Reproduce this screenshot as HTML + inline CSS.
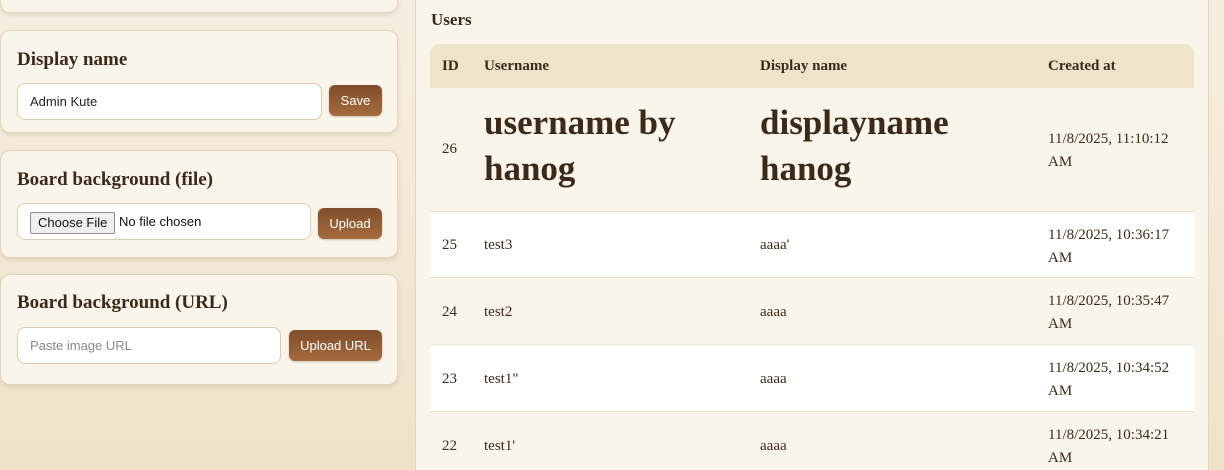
<!DOCTYPE html><html style="width:1224px;height:470px;overflow:hidden"><head><style>
*{box-sizing:border-box;margin:0;padding:0}
body{width:1224px;height:470px;overflow:hidden;background:linear-gradient(180deg,#f5eee0,#efe2c9);font-family:"Liberation Serif",serif;color:#3b2a1a;position:relative}
.card{position:absolute;left:0;width:398px;background:#faf5ea;border:1px solid #e3d5bb;border-radius:10px;box-shadow:0 2px 4px rgba(120,90,50,.15)}
.card h3{position:absolute;left:16px;font-size:19px;font-weight:bold;color:#3b2a1a}
.inp{position:absolute;left:16px;height:37px;background:#fff;border:1px solid #dccbad;border-radius:8px;font-family:"Liberation Sans",sans-serif;font-size:13px;padding-left:12px;line-height:35px;color:#222}
.btn{position:absolute;height:31px;border-radius:6px;background:linear-gradient(180deg,#7f4e2c,#a66a3d);color:#fff;font-family:"Liberation Sans",sans-serif;font-size:13px;line-height:31px;text-align:center;box-shadow:0 1px 2px rgba(0,0,0,.2)}
.panel{position:absolute;left:415px;top:-10px;width:794px;height:480px;background:#faf5ea;border:1px solid #e3d5bb;border-bottom:none;border-radius:10px 10px 0 0}
.row{position:absolute;left:430px;width:764px;border-bottom:1px solid #ece3d3;font-size:15px}
.row div{position:absolute}
</style></head><body>
<div class="card" style="top:-20px;height:33px"></div>
<div class="card" style="top:30px;height:103px"><h3 style="top:18px">Display name</h3>
<div class="inp" style="top:52px;width:305px">Admin Kute</div>
<div class="btn" style="left:328px;top:54px;width:53px">Save</div></div>
<div class="card" style="top:150px;height:108px"><h3 style="top:18px">Board background (file)</h3>
<div class="inp" style="top:52px;width:294px;color:#111"><span style="display:inline-block;height:22px;line-height:20px;border:1px solid #8f8f8f;background:#efefef;border-radius:2px;padding:0 7px;margin-left:0;vertical-align:middle">Choose File</span> No file chosen</div>
<div class="btn" style="left:317px;top:57px;width:64px">Upload</div></div>
<div class="card" style="top:274px;height:111px"><h3 style="top:17px">Board background (URL)</h3>
<div class="inp" style="top:52px;width:264px;color:#8a8a8a">Paste image URL</div>
<div class="btn" style="left:288px;top:55px;width:93px">Upload URL</div></div>
<div class="panel"></div>
<div style="position:absolute;left:431px;top:10px;font-size:17px;font-weight:bold">Users</div>
<div class="row" style="top:44px;height:44px;background:#efe3ca;border-radius:10px 10px 0 0;font-weight:bold;border:none">
<div style="left:12px;top:14px">ID</div><div style="left:54px;top:14px">Username</div><div style="left:330px;top:14px">Display name</div><div style="left:618px;top:14px">Created at</div></div>
<div class="row" style="top:88px;height:124px;background:#faf5ea">
<div style="left:12px;top:53px">26</div><div style="left:54px;top:12px;font-size:35px;font-weight:bold;line-height:46px">username by<br>hanog</div><div style="left:330px;top:12px;font-size:35px;font-weight:bold;line-height:46px">displayname<br>hanog</div><div style="left:618px;top:40px;line-height:23px">11/8/2025, 11:10:12<br>AM</div></div>
<div class="row" style="top:212px;height:66px;background:#fff"><div style="left:12px;top:25px">25</div><div style="left:54px;top:25px">test3</div><div style="left:330px;top:25px">aaaa'</div><div style="left:618px;top:12px;line-height:23px">11/8/2025, 10:36:17<br>AM</div></div>
<div class="row" style="top:278px;height:67px;background:#faf5ea"><div style="left:12px;top:26px">24</div><div style="left:54px;top:26px">test2</div><div style="left:330px;top:26px">aaaa</div><div style="left:618px;top:12px;line-height:23px">11/8/2025, 10:35:47<br>AM</div></div>
<div class="row" style="top:345px;height:67px;background:#fff"><div style="left:12px;top:26px">23</div><div style="left:54px;top:26px">test1"</div><div style="left:330px;top:26px">aaaa</div><div style="left:618px;top:12px;line-height:23px">11/8/2025, 10:34:52<br>AM</div></div>
<div class="row" style="top:412px;height:58px;background:#faf5ea;border:none"><div style="left:12px;top:26px">22</div><div style="left:54px;top:26px">test1'</div><div style="left:330px;top:26px">aaaa</div><div style="left:618px;top:12px;line-height:23px">11/8/2025, 10:34:21<br>AM</div></div>
</body></html>
